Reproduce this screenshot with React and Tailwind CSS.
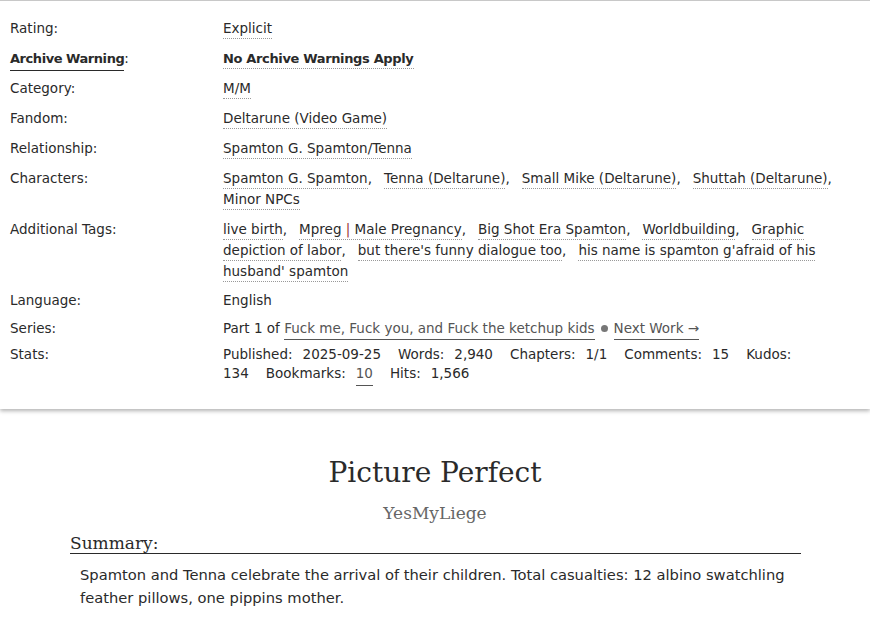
import React from "react";

const sans = { fontFamily: '"DejaVu Sans", "Noto Sans", sans-serif' };
const serif = { fontFamily: '"DejaVu Serif", "Liberation Serif", serif' };

function Tag({ children, bold }) {
  return (
    <a
      className={
        "border-b border-dotted border-[#999] pb-[2px] text-[#2a2a2a] " +
        (bold ? "font-bold text-[13px] tracking-[-0.35px]" : "")
      }
    >
      {children}
    </a>
  );
}

function Item({ children, last }) {
  return (
    <span className="mr-[12px]">
      {children}
      {last ? null : ","}
    </span>
  );
}

function Row({ label, children, leading = "leading-[21px]", mb = "mb-[9px]" }) {
  return (
    <div className={"grid grid-cols-[213px_1fr] " + leading + " " + mb}>
      <div>{label}</div>
      <div className="whitespace-nowrap">{children}</div>
    </div>
  );
}

function Stat({ k, v, link }) {
  return (
    <>
      <span className="mr-[10px]">{k}</span>
      {link ? (
        <a className="mr-[17px] border-b border-[#555] pb-[4px] text-[#555]">{v}</a>
      ) : (
        <span className="mr-[17px]">{v}</span>
      )}
    </>
  );
}

export default function App() {
  return (
    <div className="min-h-screen bg-white text-[#2a2a2a] text-[13.5px]" style={sans}>
      <div className="relative border-t border-[#c8c8c8] bg-white pt-[17px] pb-[26px] pl-[10px] shadow-[0_2px_4px_rgba(0,0,0,0.3)]">
        <Row label="Rating:">
          <Tag>Explicit</Tag>
        </Row>
        <Row
          label={
            <span>
              <span className="border-b border-[#2a2a2a] pb-[4px] text-[13px] font-bold tracking-[-0.45px]">
                Archive Warning
              </span>
              <span>:</span>
            </span>
          }
        >
          <Tag bold>No Archive Warnings Apply</Tag>
        </Row>
        <Row label="Category:">
          <Tag>M/M</Tag>
        </Row>
        <Row label="Fandom:">
          <Tag>Deltarune (Video Game)</Tag>
        </Row>
        <Row label="Relationship:">
          <Tag>Spamton G. Spamton/Tenna</Tag>
        </Row>
        <Row label="Characters:">
          <Item><Tag>Spamton G. Spamton</Tag></Item>
          <Item><Tag>Tenna (Deltarune)</Tag></Item>
          <Item><Tag>Small Mike (Deltarune)</Tag></Item>
          <Item><Tag>Shuttah (Deltarune)</Tag></Item>
          <br />
          <Item last><Tag>Minor NPCs</Tag></Item>
        </Row>
        <Row label="Additional Tags:">
          <Item><Tag>live birth</Tag></Item>
          <Item>
            <Tag>
              Mpreg <span className="text-[#993333]">|</span> Male Pregnancy
            </Tag>
          </Item>
          <Item><Tag>Big Shot Era Spamton</Tag></Item>
          <Item><Tag>Worldbuilding</Tag></Item>
          <Item>
            <Tag>
              Graphic
              <br />
              depiction of labor
            </Tag>
          </Item>
          <Item><Tag>but there's funny dialogue too</Tag></Item>
          <Item last>
            <Tag>
              his name is spamton g'afraid of his
              <br />
              husband' spamton
            </Tag>
          </Item>
        </Row>
        <Row label="Language:" leading="leading-[19px]">
          English
        </Row>
        <Row label="Series:" leading="leading-[19px]" mb="mb-[7px]">
          Part 1 of{" "}
          <a className="border-b border-[#555] pb-[3px] text-[#555]">Fuck me, Fuck you, and Fuck the ketchup kids</a>
          <span className="mx-[6px] inline-block h-[7px] w-[7px] rounded-full bg-[#777] align-[1px]"></span>
          <a className="border-b border-[#555] pb-[3px] text-[#555]">Next Work →</a>
        </Row>
        <Row label="Stats:" leading="leading-[19px]" mb="mb-0">
          <Stat k="Published:" v="2025-09-25" />
          <Stat k="Words:" v="2,940" />
          <Stat k="Chapters:" v="1/1" />
          <Stat k="Comments:" v="15" />
          <span className="mr-[10px]">Kudos:</span>
          <br />
          <span className="mr-[17px]">134</span>
          <Stat k="Bookmarks:" v="10" link />
          <Stat k="Hits:" v="1,566" />
        </Row>
      </div>

      <div className="pt-[48px]">
        <h2 className="text-center text-[28px] leading-[32px] font-normal text-[#2a2a2a]" style={serif}>
          Picture Perfect
        </h2>
        <h3 className="mt-[14px] text-center text-[17px] leading-[20px] font-normal text-[#666]" style={serif}>
          YesMyLiege
        </h3>
        <div className="mx-[70px] mt-[10px] w-[731px]">
          <h3 className="border-b border-[#2a2a2a] text-[17px] leading-[20px] font-normal" style={serif}>
            Summary:
          </h3>
          <p className="mt-[9px] pl-[10px] pr-[10px] text-[14.7px] leading-[23.4px]">
            Spamton and Tenna celebrate the arrival of their children. Total casualties: 12 albino swatchling feather
            pillows, one pippins mother.
          </p>
        </div>
      </div>
    </div>
  );
}
